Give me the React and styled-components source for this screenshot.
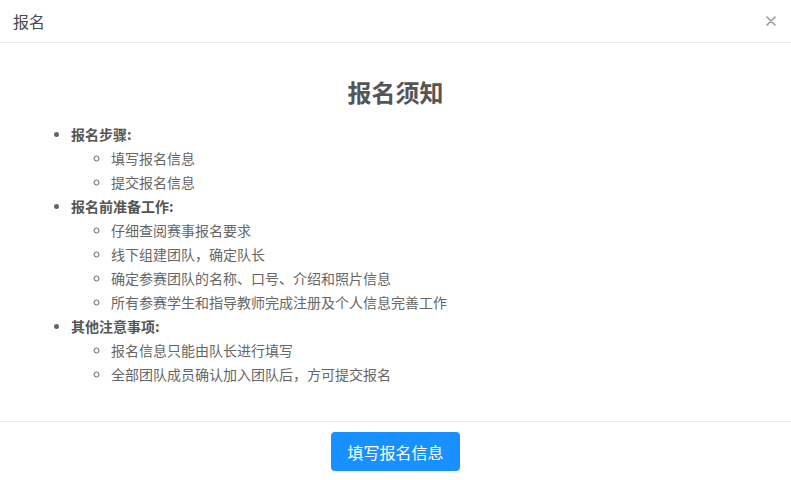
import React from "react";
import styled, { createGlobalStyle } from "styled-components";

const Global = createGlobalStyle`
  html, body { margin: 0; padding: 0; background: #fff; }
  body { font-family: "Noto Sans CJK SC", "Noto Sans", sans-serif; }
  * { box-sizing: border-box; }
`;

const Dialog = styled.div`
  width: 791px;
  height: 480px;
  display: flex;
  flex-direction: column;
  background: #fff;
`;

const Header = styled.div`
  height: 43px;
  display: flex;
  align-items: center;
  justify-content: space-between;
  padding: 0 13px 0 13px;
  border-bottom: 1px solid #e8e8e8;
`;

const Title = styled.div`
  font-size: 16px;
  color: #4a4a4a;
  line-height: 22px;
`;

const Close = styled.button`
  border: none;
  background: none;
  padding: 0;
  width: 14px;
  height: 14px;
  display: flex;
  align-items: center;
  justify-content: center;
  cursor: pointer;
`;

const Body = styled.div`
  flex: 1;
  padding: 31px 0 35px;
  border-bottom: 1px solid #e8e8e8;
`;

const Heading = styled.h2`
  margin: 0 0 12px;
  text-align: center;
  font-size: 24px;
  line-height: 36px;
  font-weight: 700;
  color: #555;
`;

const List = styled.ul`
  margin: 0;
  padding-left: ${(p) => (p.$nested ? "40px" : "71px")};
  list-style-type: ${(p) => (p.$nested ? "circle" : "disc")};
`;

const Item = styled.li`
  font-size: 14px;
  line-height: 24px;
  color: ${(p) => (p.$strong ? "#555" : "#666")};
  font-weight: ${(p) => (p.$strong ? 700 : 400)};
  &::marker { color: #666; font-size: 13px; }
`;

const Footer = styled.div`
  height: 58px;
  display: flex;
  justify-content: center;
  padding-top: 10px;
`;

const Primary = styled.button`
  width: 129px;
  height: 39px;
  border: none;
  border-radius: 4px;
  background: #1890ff;
  color: #fff;
  font-family: inherit;
  font-size: 16px;
  cursor: pointer;
`;

const sections = [
  { title: "报名步骤:", items: ["填写报名信息", "提交报名信息"] },
  {
    title: "报名前准备工作:",
    items: [
      "仔细查阅赛事报名要求",
      "线下组建团队，确定队长",
      "确定参赛团队的名称、口号、介绍和照片信息",
      "所有参赛学生和指导教师完成注册及个人信息完善工作",
    ],
  },
  {
    title: "其他注意事项:",
    items: ["报名信息只能由队长进行填写", "全部团队成员确认加入团队后，方可提交报名"],
  },
];

export default function App() {
  return (
    <>
      <Global />
      <Dialog>
        <Header>
          <Title>报名</Title>
          <Close aria-label="close">
            <svg width="10" height="10" viewBox="0 0 10 10">
              <path d="M1 1L9 9M9 1L1 9" stroke="#999" strokeWidth="1.6" strokeLinecap="round" />
            </svg>
          </Close>
        </Header>
        <Body>
          <Heading>报名须知</Heading>
          <List>
            {sections.map((s) => (
              <Item $strong key={s.title}>
                {s.title}
                <List $nested>
                  {s.items.map((t) => (
                    <Item key={t}>{t}</Item>
                  ))}
                </List>
              </Item>
            ))}
          </List>
        </Body>
        <Footer>
          <Primary>填写报名信息</Primary>
        </Footer>
      </Dialog>
    </>
  );
}
